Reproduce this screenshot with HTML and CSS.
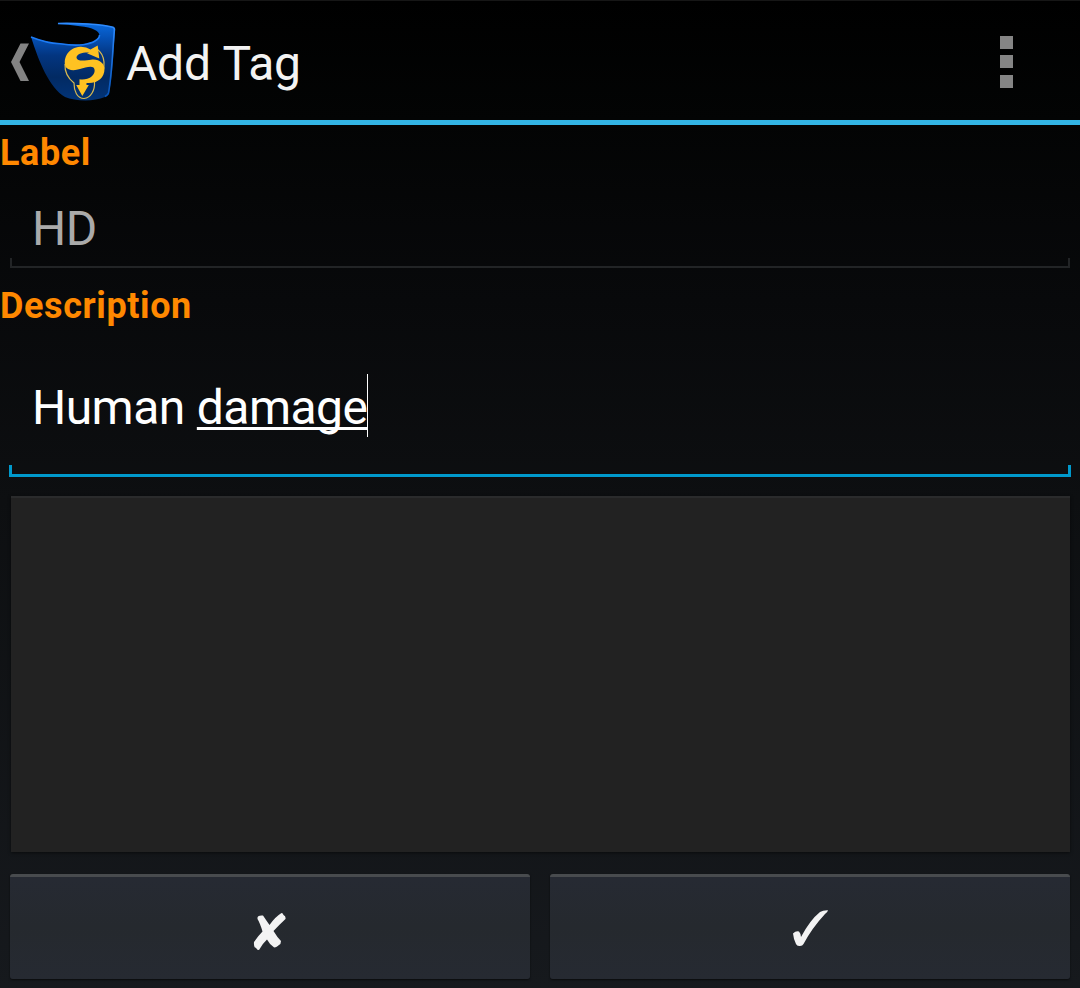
FILE: index.html
```html
<!DOCTYPE html>
<html lang="en">
<head>
<meta charset="utf-8">
<title>Add Tag</title>
<link rel="stylesheet" href="styles.css">
</head>
<body>
<header class="bar">
  <svg class="logo" viewBox="0 0 126 120" aria-hidden="true">
    <defs>
      <linearGradient id="cup" x1="0" y1="0" x2="0" y2="1">
        <stop offset="0" stop-color="#0a6ade"/>
        <stop offset=".2" stop-color="#0550b4"/>
        <stop offset=".42" stop-color="#033580"/>
        <stop offset=".7" stop-color="#022a63"/>
        <stop offset="1" stop-color="#023478"/>
      </linearGradient>
      <linearGradient id="edge" x1="0" y1="0" x2="0" y2="1">
        <stop offset="0" stop-color="#2f8cff"/>
        <stop offset="1" stop-color="#0754b8"/>
      </linearGradient>
    </defs>
    <path d="M20.500 43.500H29L19.500 62L29 81H20.500L11 62Z" fill="#838383"/>
    <path d="M31 36.700C42 41 51 42.800 60 43.300Q74 45.700 83 44.300Q91 43 95 40.500Q99.300 38 99.300 35Q99 32 95 30Q89 27 80 26.300Q68 24.500 57 24Q62 22.500 75 23C92 23.500 104 25 113 27Q115.500 28 115 31C113 52 113 74 109 93Q108.500 96 105 97C93 102 75 101 65 97C49 87 39 62 31 36.700Z" fill="url(#cup)"/>
    <path d="M58 23.500C75 22.800 102 24.500 113 27.200Q115 28 114.300 31C112.500 52 112 74 108.500 93Q108 95 105 96.500" fill="none" stroke="url(#edge)" stroke-width="1.600"/>
    <path d="M31 36.900C42 41.300 51 43.200 60 43.700Q74 46 83 44.700Q91 43.500 95 41Q99.500 38.500 99.500 35" fill="none" stroke="#1c7af4" stroke-width="1.600"/>
    <path d="M65 64C64.500 72 69 79 74 83C74 91 77 98.500 84 98.500C91 98 95 90 94.500 82C101 78 105 70 104 62C103.500 57 101 52 97.500 49.500" fill="none" stroke="#d8b94f" stroke-width="1.200"/>
    <path d="M65.500 66.700C62.500 57 69.500 47.500 80 46.800Q86 46.500 90.500 49.500L97.700 45.500L99.300 58.500L87 53.300L89.500 52.500C83 52 76.500 54 76.500 57.500C77 62 86 60.500 91 59.700C99 58.500 104.500 63.500 104.500 69C104.500 78 97 84 86.500 83V85H88.800L82.300 96L76.200 85H79.500V79.300C84 80 88.500 79 91 77C95 74 95.500 70 93.500 67.500C91 65.500 85 67.500 80 69C74 71 68 70.500 65.500 66.700Z" fill="#ffc222"/>
  </svg>
  <h1 class="title">Add Tag</h1>
  <button class="more" aria-label="More options"><i class="dot"></i><i class="dot"></i><i class="dot"></i></button>
</header>
<main class="form">
  <div class="caption">Label</div>
  <div class="field hint"><span class="value">HD</span></div>
  <div class="caption second">Description</div>
  <div class="field active"><span class="value">Human <span class="composing">damage</span></span><i class="caret"></i></div>
  <div class="panel"></div>
  <div class="actions">
    <button class="action" aria-label="Cancel">
      <svg class="glyph" viewBox="0 0 44 44"><path d="M9.500 6.500Q10 4 15 4.500Q18 9 21.500 14Q27 6 33.500 2Q35 2 35.500 4Q38 5 37.500 8Q31 14 25.500 20Q29 26 33 30Q33 33 31 34Q27 38 25 35.500Q21.500 33 19 28.500Q15 32 11 39Q9 39 8.500 37.500Q5.500 37 6 31Q10 25 14.500 20.500Q12 12 9.500 8Z" fill="#f3f3f3"/></svg>
    </button>
    <button class="action" aria-label="Confirm">
      <svg class="glyph" viewBox="0 0 44 44"><path d="M5 22.500Q8 19.500 11 20.500Q12.500 22 13 26Q22 9 32 1Q35-1 40-.8Q39.500 1.500 37 3Q24 17 15.500 33Q14.500 35 12 35Q9 35.500 8 33Q5.500 28 5 22.500Z" fill="#f3f3f3"/></svg>
    </button>
  </div>
</main>
</body>
</html>
```
FILE: styles.css
```css
* { box-sizing: border-box; }
body {
  margin: 0;
  width: 1080px;
  height: 988px;
  overflow: hidden;
  font-family: Roboto, sans-serif;
  background: linear-gradient(#000 0, #030404 120px, #08090b 300px, #0d0f11 500px, #16191d 988px);
}
button { border: 0; padding: 0; background: none; font: inherit; }
.bar {
  display: flex;
  height: 125px;
  border-top: 1px solid #161616;
  border-bottom: 5px solid #33b5e5;
}
.logo { width: 126px; height: 120px; margin-top: -1px; flex: none; }
.title {
  margin: 0;
  flex: 1;
  font-size: 48px;
  font-weight: 400;
  letter-spacing: -.25px;
  word-spacing: 1px;
  line-height: 126px;
  height: 119px;
  color: #f3f3f3;
}
.more {
  display: flex;
  flex-direction: column;
  gap: 6px;
  padding-top: 35px;
  margin-right: 67px;
}
.dot { width: 13px; height: 13px; background: #858585; }
.dot:last-child { margin-top: 1px; }
.form { display: flex; flex-direction: column; }
.caption {
  height: 56px;
  line-height: 56px;
  font-size: 36px;
  font-weight: 700;
  letter-spacing: .6px;
  color: #ff8800;
}
.second { height: 76px; line-height: 76px; }
.field {
  display: flex;
  align-items: center;
  margin: 0 9px;
  padding-left: 23px;
  font-size: 48px;
  letter-spacing: -.55px;
  word-spacing: .8px;
  line-height: 56px;
  color: #fff;
}
.field::after {
  content: "";
  position: absolute;
  border: solid #222426;
}
.hint { position: relative; height: 87px; padding-top: 8px; color: #aaa; }
.hint::after { left: 1px; right: 1px; bottom: 0; height: 8px; border-width: 0 2px 2px; }
.active { position: relative; height: 133px; padding-bottom: 6px; }
.active::after { left: 0; right: 0; bottom: 0; height: 9px; border-color: #0099cc; border-width: 0 3px 3px; }
.composing {
  text-decoration: underline;
  text-decoration-thickness: 3px;
  text-underline-offset: 3px;
  text-decoration-skip-ink: none;
}
.caret { width: 1px; height: 63px; background: #fff; margin-bottom: 5px; }
.panel {
  height: 356px;
  margin: 19px 10px 0 11px;
  background: #222;
  border-top: 2px solid #2a2b2c;
  box-shadow: 0 1px 3px #0008;
}
.actions { display: flex; gap: 20px; padding: 22px 10px 0; }
.action {
  flex: 1;
  display: flex;
  justify-content: center;
  align-items: center;
  height: 105px;
  border-radius: 3px;
  background: linear-gradient(#484b4e 3px, #262a33 3px, #25292e 50%, #262a32);
  box-shadow: 0 1px 2px #0009;
}
.glyph { width: 44px; height: 44px; overflow: visible; margin-top: 13px; }
```
